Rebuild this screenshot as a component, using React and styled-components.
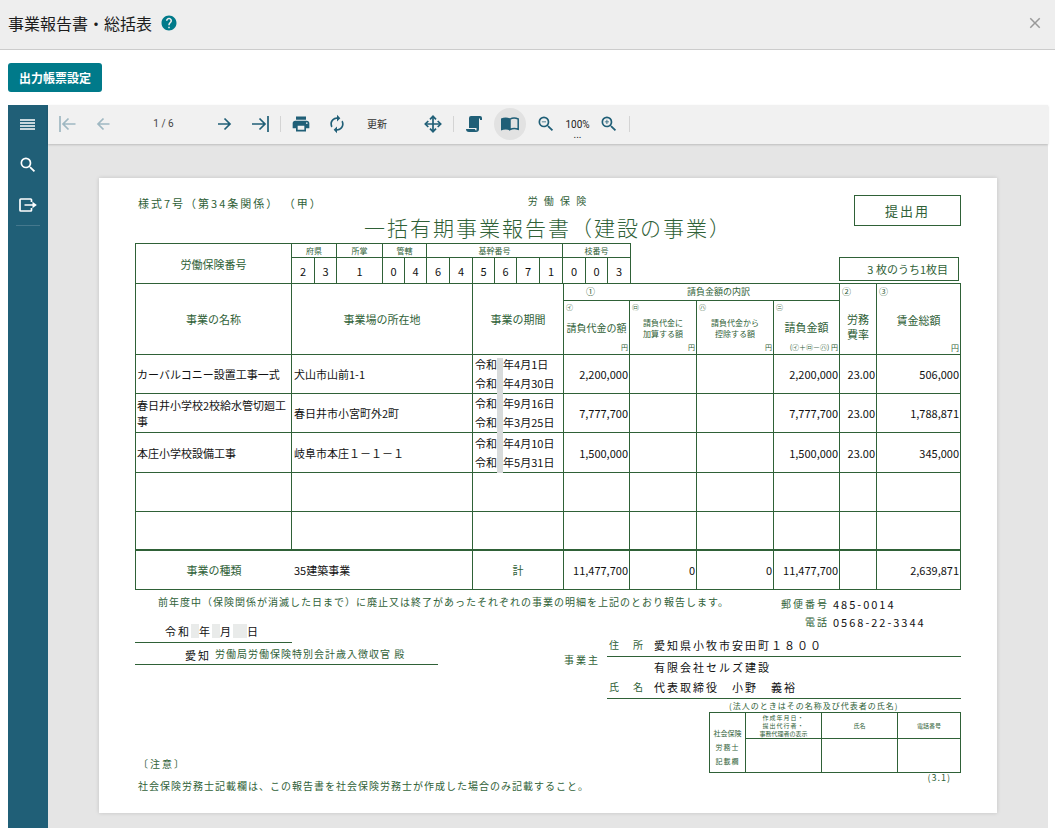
import styled, { createGlobalStyle } from 'styled-components';
import { MdHelp, MdClose, MdSearch, MdPrint, MdAutorenew, MdZoomIn, MdZoomOut } from 'react-icons/md';

const green = '#2f6137';
const teal = '#007a8a';
const navy = '#205f77';

const GlobalStyle = createGlobalStyle`
  * {
    box-sizing: border-box;
  }

  body {
    margin: 0;
    background-color: #ffffff;
    font-family: "Noto Sans CJK JP", "Noto Sans", sans-serif;
  }

  button {
    font-family: inherit;
    cursor: pointer;
  }
`;

const Page = styled.div`
  display: flex;
  flex-direction: column;
  min-height: 100vh;
`;

const Header = styled.header`
  display: flex;
  align-items: center;
  gap: 8px;
  height: 50px;
  padding: 0 8px 4px;
  background-color: #eeeeee;
  border-bottom: 1px solid #cccccc;
`;

const Title = styled.h1`
  margin: 0;
  font-size: 16px;
  line-height: 24px;
  font-weight: 400;
  color: #1c1c1c;
`;

const PlainButton = styled.button`
  display: flex;
  align-items: center;
  justify-content: center;
  padding: 0;
  border: 0;
  background: none;
  color: ${props => props.$color};
`;

const CloseButton = styled(PlainButton)`
  margin-left: auto;
  width: 24px;
  height: 24px;
`;

const Actions = styled.div`
  padding: 13px 8px;
`;

const SettingButton = styled.button`
  display: block;
  height: 29px;
  padding: 0 11px;
  border: 0;
  border-radius: 3px;
  background-color: ${teal};
  color: #ffffff;
  font-size: 12px;
  line-height: 27px;
  font-weight: bold;

  &:hover {
    background-color: #006675;
  }
`;

const Viewer = styled.main`
  display: flex;
  flex: 1;
  margin: 0 7px 0 8px;
`;

const Sidebar = styled.nav`
  width: 40px;
  flex-shrink: 0;
  background-color: ${navy};
`;

const SideButton = styled(PlainButton)`
  width: 40px;
  height: 40px;
`;

const SideLine = styled.div`
  height: 1px;
  margin: 0 8px;
  background-color: #45788d;
`;

const ViewerBody = styled.div`
  display: flex;
  flex-direction: column;
  flex: 1;
  min-width: 0;
  background-color: #e5e5e5;
`;

const Toolbar = styled.div`
  display: flex;
  align-items: center;
  height: 39px;
  padding: 0 0 2px 1px;
  background-color: #f1f1f1;
  box-shadow: 0 1px 2px rgba(0, 0, 0, 0.18);
`;

const ToolButton = styled(PlainButton)`
  width: 36px;
  height: 36px;

  span {
    display: flex;
    align-items: center;
    justify-content: center;
    width: 32px;
    height: 32px;
    border-radius: 50%;
    background-color: ${props => (props.$active ? '#e2e2e2' : 'transparent')};
  }
`;

const PageCount = styled.div`
  width: 85px;
  font-family: Roboto, sans-serif;
  font-size: 10px;
  line-height: 12px;
  text-align: center;
  color: #444444;
`;

const Refresh = styled(PlainButton)`
  justify-content: flex-start;
  width: 60px;
  padding-left: 12px;
  font-size: 10px;
`;

const ZoomButton = styled(PlainButton)`
  flex-direction: column;
  align-self: flex-start;
  width: 27px;
  padding-top: 14px;
  font-family: Roboto, sans-serif;
  font-size: 10px;
  line-height: 12px;

  small {
    font-size: 10px;
    line-height: 8px;
  }
`;

const Separator = styled.div`
  width: 1px;
  height: 16px;
  margin: 0 2px;
  background-color: #d4d4d4;
`;

const Canvas = styled.div`
  padding: 34px 51px 15px;
`;

const Paper = styled.article`
  max-width: 898px;
  margin: 0 auto;
  padding: 17px 36px 16px;
  background-color: #ffffff;
  box-shadow: 0 0 4px rgba(0, 0, 0, 0.15);
  color: ${green};
  font-size: 11px;
`;

const PaperHead = styled.div`
  display: grid;
  grid-template-columns: 1fr auto 1fr;
  height: 48px;
`;

const FormNo = styled.div`
  padding-left: 3px;
  line-height: 16px;
  letter-spacing: 2px;
  white-space: nowrap;
`;

const FormTitle = styled.div`
  text-align: center;

  small {
    display: block;
    padding-left: 20px;
    font-size: 10px;
    line-height: 12px;
    letter-spacing: 2px;
  }

  h2 {
    margin: 0;
    font-size: 21px;
    line-height: 40px;
    font-weight: 300;
    letter-spacing: 2px;
    white-space: nowrap;
  }
`;

const Stamp = styled.div`
  justify-self: end;
  width: 107px;
  height: 31px;
  border: 1px solid ${green};
  font-size: 13px;
  line-height: 30px;
  letter-spacing: 2px;
  text-align: center;
`;

const NumberRow = styled.div`
  display: flex;
  justify-content: space-between;
  align-items: flex-end;
`;

const SheetCount = styled.div`
  width: 120px;
  height: 24px;
  margin: 0 2px 2px;
  padding-right: 10px;
  border: 1px solid ${green};
  line-height: 22px;
  text-align: right;
`;

const FormTable = styled.table`
  width: ${props => props.$width || '100%'};
  table-layout: fixed;
  border-collapse: separate;
  border-spacing: 0;
  border-top: 1px solid ${green};
  border-left: 1px solid ${green};
`;

const Row = styled.tr`
  height: ${props => props.$height}px;
`;

const Cell = styled.td`
  padding: ${props => props.$pad || '0'};
  border-right: ${props => (props.$open ? '0' : `1px solid ${green}`)};
  border-bottom: ${props => (props.$last ? '0' : `${props.$thick ? 2 : 1}px solid ${green}`)};
  color: ${props => (props.$ink ? '#111111' : green)};
  font-size: ${props => props.$size || 11}px;
  font-weight: 400;
  line-height: ${props => props.$line || 16}px;
  text-align: ${props => props.$align || 'center'};
  vertical-align: middle;
`;

const HeadBox = styled.div`
  display: flex;
  flex-direction: column;
  height: ${props => props.$height}px;
`;

const Mark = styled.div`
  height: ${props => (props.$big ? 16 : 13)}px;
  padding-left: 2px;
  font-size: ${props => (props.$big ? 9 : 7)}px;
  line-height: ${props => (props.$big ? 16 : 13)}px;
  text-align: left;
`;

const HeadText = styled.div`
  display: flex;
  flex: 1;
  align-items: center;
  justify-content: center;
  font-size: ${props => props.$size || 11}px;
  line-height: ${props => props.$line || 15}px;
  white-space: pre;
`;

const Unit = styled.div`
  height: 13px;
  padding-right: 1px;
  font-size: ${props => props.$size || 7}px;
  line-height: 13px;
  text-align: right;
  white-space: nowrap;
`;

const Breakdown = styled.div`
  display: flex;
  gap: 92px;
  padding-left: 22px;
`;

const PeriodCell = styled(Cell)`
  position: relative;
`;

/* strip that hides the era years */
const YearMask = styled.div`
  position: absolute;
  z-index: 1;
  top: 3px;
  left: 24px;
  width: 6px;
  height: 115px;
  background-color: #d8dbdb;
`;

const Bottom = styled.div`
  display: grid;
  grid-template-columns: 303px 399px;
  justify-content: space-between;
`;

const Declaration = styled.p`
  margin: 0;
  padding-left: 23px;
  font-size: 10px;
  line-height: 24px;
  letter-spacing: 1px;
  white-space: nowrap;
`;

const DateLine = styled.div`
  display: flex;
  align-items: center;
  width: 157px;
  height: 29px;
  padding: 6px 0 0 30px;
  border-bottom: 1px solid ${green};
  color: #111111;
  letter-spacing: 2px;
`;

const Blank = styled.span`
  width: ${props => props.$width}px;
  height: 14px;
  background-color: #e9ebea;
`;

const Addressee = styled.div`
  display: flex;
  gap: 4px;
  height: 22px;
  padding-left: 50px;
  border-bottom: 1px solid ${green};
  font-size: 10px;
  line-height: 22px;
  letter-spacing: 1px;
  white-space: nowrap;

  b {
    color: #111111;
    font-size: 11px;
    line-height: 24px;
    font-weight: 400;
    letter-spacing: 2px;
  }
`;

const Notes = styled.div`
  margin-top: 88px;
  padding-left: 3px;
  font-size: 10px;
  line-height: 22px;
  letter-spacing: 1px;
  white-space: nowrap;

  h3 {
    margin: 0;
    font-size: 10px;
    font-weight: 400;
    letter-spacing: 2px;
  }

  p {
    margin: 0;
  }
`;

const Contact = styled.dl`
  display: grid;
  grid-template-columns: auto 128px;
  justify-content: end;
  column-gap: 4px;
  margin: 5px 0 0;
  line-height: 18px;
  letter-spacing: 2px;

  dt {
    font-size: 10px;
    text-align: right;
  }

  dd {
    margin: 0;
    color: #111111;
  }
`;

const Owner = styled.div`
  display: flex;
`;

const OwnerLabel = styled.div`
  width: 45px;
  padding: 20px 0 0 2px;
  font-size: 10px;
  line-height: 18px;
  letter-spacing: 2px;
`;

const OwnerFields = styled.dl`
  flex: 1;
  margin: 0;
`;

const OwnerField = styled.div`
  display: grid;
  grid-template-columns: 47px 1fr;
  height: ${props => props.$height}px;
  padding-top: ${props => props.$top || 0}px;
  border-bottom: ${props => (props.$lined ? `1px solid ${green}` : '0')};
  line-height: 20px;
  letter-spacing: 2px;

  dt {
    padding-left: 2px;
    font-size: 10px;
  }

  dd {
    grid-column: 2;
    margin: 0;
    color: #111111;
  }
`;

const Agent = styled.div`
  width: 252px;
  margin-left: auto;
`;

const AgentNote = styled.div`
  padding-left: 20px;
  font-size: 8px;
  line-height: 13px;
  letter-spacing: 1px;
  white-space: nowrap;
`;

const Spaced = styled.span`
  display: block;
  letter-spacing: 1px;
`;

const Version = styled.div`
  padding-right: 10px;
  font-size: 9px;
  line-height: 10px;
  letter-spacing: 1px;
  text-align: right;
`;

const Icon = ({ children }) => (
  <svg width="18" height="18" viewBox="0 0 18 18" fill="none" stroke="currentColor" strokeWidth="1.7" aria-hidden="true">
    {children}
  </svg>
);

const MenuIcon = () => (
  <Icon><path d="M1 4h15M1 7h15M1 10h15M1 13h15" strokeWidth="1.4" /></Icon>
);

const ExportIcon = () => (
  <Icon>
    <path d="M12.5 6V3.8a.8.8 0 0 0-.8-.8H1.800a.8.8 0 0 0-.8.8v10.400a.8.8 0 0 0 .8.8h9.900a.8.8 0 0 0 .8-.8V12M5.500 9h9" />
    <path d="M13.5 5.800L17.800 9l-4.300 3.200z" fill="currentColor" stroke="none" />
  </Icon>
);

const FirstIcon = () => (
  <Icon><path d="M2 1v16M17.5 9H5M10.500 3.500L5 9l5.500 5.500" /></Icon>
);

const PrevIcon = () => (
  <Icon><path d="M15.500 9H4M9.500 3.500L4 9l5.500 5.500" /></Icon>
);

const NextIcon = () => (
  <Icon><path d="M3 9h12M9.500 3.500L15 9l-5.500 5.500" /></Icon>
);

const LastIcon = () => (
  <Icon><path d="M17 1v16M1 9h13M8.500 3.500L14 9l-5.500 5.500" /></Icon>
);

const MoveIcon = () => (
  <Icon>
    <path d="M9 2v14M2 9h14" />
    <path d="M6 4.300L9 1.300l3 3M6 13.700l3 3 3-3M4.300 6l-3 3 3 3M13.700 6l3 3-3 3" />
  </Icon>
);

const ScrollIcon = () => (
  <Icon>
    <path
      d="M6 1h9a2 2 0 0 1 2 2v2h-2V3.500h-1V14a3 3 0 0 1-3 3H4a3 3 0 0 1-3-3h9a1.500 1.500 0 0 0 1.500 1.500V13H4V3a2 2 0 0 1 2-2z"
      fill="currentColor"
      stroke="none"
    />
  </Icon>
);

const BookIcon = () => (
  <Icon>
    <path d="M0 3.500C3 2 6.500 2 9 3.500v12C6.500 14 3 14 0 15.500z" fill="currentColor" stroke="none" />
    <path d="M9 4.200c2.500-1.400 5.500-1.400 8.200-.2v10.200c-2.700-1-5.700-1-8.200.3z" strokeWidth="1.5" />
  </Icon>
);

const numberGroups = [
  { label: '府県', digits: '23' },
  { label: '所掌', digits: '1' },
  { label: '管轄', digits: '04' },
  { label: '基幹番号', digits: '645671' },
  { label: '枝番号', digits: '003' },
];

const numberWidths = [156, 23, 22, 46, 22, 22, 23, 23, 22, 22, 23, 23, 23, 22, 23];
const columnWidths = [156, 181, 91, 66, 67, 77, 66, 37, 84];

const works = [
  { name: 'カーバルコニー設置工事一式', place: '犬山市山前1-1', from: '令和6年4月1日', to: '令和6年4月30日', price: '2,200,000', rate: '23.00', wage: '506,000' },
  { name: '春日井小学校2校給水管切廻工事', place: '春日井市小宮町外2町', from: '令和6年9月16日', to: '令和7年3月25日', price: '7,777,700', rate: '23.00', wage: '1,788,871' },
  { name: '本庄小学校設備工事', place: '岐阜市本庄１－１－１', from: '令和6年4月10日', to: '令和6年5月31日', price: '1,500,000', rate: '23.00', wage: '345,000' },
];

const Cols = ({ widths }) => (
  <colgroup>
    {widths.map((width, i) => <col key={i} width={width} />)}
  </colgroup>
);

const Amount = ({ children }) => (
  <Cell $ink $align="right" $pad="0 1px 0 0">{children}</Cell>
);

function InsuranceNumber() {
  return (
    <FormTable $width="496px">
      <Cols widths={numberWidths} />
      <tbody>
        <Row $height={14}>
          <Cell as="th" rowSpan={2} $last>労働保険番号</Cell>
          {numberGroups.map(group => (
            <Cell as="th" key={group.label} colSpan={group.digits.length} $size={8} $line={12}>{group.label}</Cell>
          ))}
        </Row>
        <Row $height={25}>
          {numberGroups.map(group => group.digits.split('').map((digit, i) => (
            <Cell key={group.label + i} $ink $last>{digit}</Cell>
          )))}
        </Row>
      </tbody>
    </FormTable>
  );
}

function HeadCell({ mark, big, text, size, line, unit, unitSize, height, rowSpan }) {
  return (
    <Cell as="th" rowSpan={rowSpan}>
      <HeadBox $height={height}>
        <Mark $big={big}>{mark}</Mark>
        <HeadText $size={size} $line={line}>{text}</HeadText>
        {unit && <Unit $size={unitSize}>{unit}</Unit>}
      </HeadBox>
    </Cell>
  );
}

function WorkTable() {
  return (
    <FormTable>
      <Cols widths={columnWidths} />
      <thead>
        <Row $height={17}>
          <Cell as="th" rowSpan={2}>事業の名称</Cell>
          <Cell as="th" rowSpan={2}>事業場の所在地</Cell>
          <Cell as="th" rowSpan={2}>事業の期間</Cell>
          <Cell as="th" colSpan={4} $size={9}>
            <Breakdown><span>①</span><span>請負金額の内訳</span></Breakdown>
          </Cell>
          <HeadCell rowSpan={2} height={70} mark="②" big text={'労務\n費率'} />
          <HeadCell rowSpan={2} height={70} mark="③" big text="賃金総額" unit="円" unitSize={8} />
        </Row>
        <Row $height={54}>
          <HeadCell height={53} mark="㋑" text="請負代金の額" size={10} unit="円" />
          <HeadCell height={53} mark="㋺" text={'請負代金に\n加算する額'} size={8} line={11} unit="円" />
          <HeadCell height={53} mark="㋩" text={'請負代金から\n控除する額'} size={8} line={11} unit="円" />
          <HeadCell height={53} mark="㋥" text="請負金額" unit="(㋑＋㋺－㋩) 円" />
        </Row>
      </thead>
      <tbody>
        {works.map((work, i) => (
          <Row key={work.name} $height={i === 2 ? 40 : 39}>
            <Cell $ink $align="left" $pad="0 1px">{work.name}</Cell>
            <Cell $ink $align="left" $pad="0 2px">{work.place}</Cell>
            <PeriodCell $ink $align="left" $pad="0 2px" $line={19}>
              {work.from}<br />{work.to}
              {i === 0 && <YearMask />}
            </PeriodCell>
            <Amount>{work.price}</Amount>
            <Cell />
            <Cell />
            <Amount>{work.price}</Amount>
            <Amount>{work.rate}</Amount>
            <Amount>{work.wage}</Amount>
          </Row>
        ))}
        <Row $height={39}>
          {columnWidths.map((width, i) => <Cell key={i} />)}
        </Row>
        <Row $height={39}>
          {columnWidths.map((width, i) => <Cell key={i} $thick />)}
        </Row>
      </tbody>
      <tfoot>
        <Row $height={39}>
          <Cell as="th" $open>事業の種類</Cell>
          <Cell $ink $align="left" $pad="0 2px">35建築事業</Cell>
          <Cell as="th">計</Cell>
          <Amount>11,477,700</Amount>
          <Amount>0</Amount>
          <Amount>0</Amount>
          <Amount>11,477,700</Amount>
          <Cell />
          <Amount>2,639,871</Amount>
        </Row>
      </tfoot>
    </FormTable>
  );
}

function AgentTable() {
  return (
    <FormTable>
      <Cols widths={[36, 76, 76, 63]} />
      <tbody>
        <Row $height={26}>
          <Cell as="th" rowSpan={2} $size={7} $line={14} $pad="8px 0 0">
            社会保険
            <Spaced>労務士</Spaced>
            <Spaced>記載欄</Spaced>
          </Cell>
          <Cell as="th" $size={6} $line={8}>
            <Spaced>作成年月日・</Spaced>
            <Spaced>提出代行者・</Spaced>
            事務代理者の表示
          </Cell>
          <Cell as="th" $size={6} $line={8}>氏名</Cell>
          <Cell as="th" $size={6} $line={8}>電話番号</Cell>
        </Row>
        <Row $height={34}>
          <Cell />
          <Cell />
          <Cell />
        </Row>
      </tbody>
    </FormTable>
  );
}

function Report() {
  return (
    <Paper>
      <PaperHead>
        <FormNo>様式7号（第34条関係） （甲）</FormNo>
        <FormTitle>
          <small>労 働 保 険</small>
          <h2>一括有期事業報告書（建設の事業）</h2>
        </FormTitle>
        <Stamp>提出用</Stamp>
      </PaperHead>

      <NumberRow>
        <InsuranceNumber />
        <SheetCount>3 枚のうち1枚目</SheetCount>
      </NumberRow>
      <WorkTable />

      <Bottom>
        <div>
          <Declaration>前年度中（保険関係が消滅した日まで）に廃止又は終了があったそれぞれの事業の明細を上記のとおり報告します。</Declaration>
          <DateLine>
            令和<Blank $width={8} />年<Blank $width={8} />月<Blank $width={14} />日
          </DateLine>
          <Addressee><b>愛知</b>労働局労働保険特別会計歳入徴収官 殿</Addressee>
          <Notes>
            <h3>〔注意〕</h3>
            <p>社会保険労務士記載欄は、この報告書を社会保険労務士が作成した場合のみ記載すること。</p>
          </Notes>
        </div>
        <div>
          <Contact>
            <dt>郵便番号</dt>
            <dd>485-0014</dd>
            <dt>電話</dt>
            <dd>0568-22-3344</dd>
          </Contact>
          <Owner>
            <OwnerLabel>事業主</OwnerLabel>
            <OwnerFields>
              <OwnerField $height={26} $top={4} $lined>
                <dt>住　所</dt>
                <dd>愛知県小牧市安田町１８００</dd>
              </OwnerField>
              <OwnerField $height={20}>
                <dd>有限会社セルズ建設</dd>
              </OwnerField>
              <OwnerField $height={22} $lined>
                <dt>氏　名</dt>
                <dd>代表取締役　小野　義裕</dd>
              </OwnerField>
            </OwnerFields>
          </Owner>
          <Agent>
            <AgentNote>(法人のときはその名称及び代表者の氏名)</AgentNote>
            <AgentTable />
            <Version>(3.1)</Version>
          </Agent>
        </div>
      </Bottom>
    </Paper>
  );
}

function ViewerToolbar() {
  return (
    <Toolbar>
      <ToolButton $color="#9fb8c2" aria-label="最初のページ"><FirstIcon /></ToolButton>
      <ToolButton $color="#9fb8c2" aria-label="前のページ"><PrevIcon /></ToolButton>
      <PageCount>1 / 6</PageCount>
      <ToolButton $color={navy} aria-label="次のページ"><NextIcon /></ToolButton>
      <ToolButton $color={navy} aria-label="最後のページ"><LastIcon /></ToolButton>
      <Separator />
      <ToolButton $color={navy} aria-label="印刷"><MdPrint size={20} /></ToolButton>
      <ToolButton $color={navy} aria-label="再読み込み"><MdAutorenew size={20} /></ToolButton>
      <Refresh $color="#333333">更新</Refresh>
      <ToolButton $color={navy} aria-label="移動"><MoveIcon /></ToolButton>
      <Separator />
      <ToolButton $color={navy} aria-label="連続表示"><ScrollIcon /></ToolButton>
      <ToolButton $color={navy} $active aria-label="単一ページ"><span><BookIcon /></span></ToolButton>
      <ToolButton $color={navy} aria-label="縮小"><MdZoomOut size={20} /></ToolButton>
      <ZoomButton $color="#222222">100%<small>...</small></ZoomButton>
      <ToolButton $color={navy} aria-label="拡大"><MdZoomIn size={20} /></ToolButton>
      <Separator />
    </Toolbar>
  );
}

function App() {
  return (
    <Page>
      <GlobalStyle />
      <Header>
        <Title>事業報告書・総括表</Title>
        <PlainButton $color={teal} aria-label="ヘルプ"><MdHelp size={18} /></PlainButton>
        <CloseButton $color="#999999" aria-label="閉じる"><MdClose size={18} /></CloseButton>
      </Header>
      <Actions>
        <SettingButton>出力帳票設定</SettingButton>
      </Actions>
      <Viewer>
        <Sidebar>
          <SideButton $color="#ffffff" aria-label="メニュー"><MenuIcon /></SideButton>
          <SideButton $color="#ffffff" aria-label="検索"><MdSearch size={20} /></SideButton>
          <SideButton $color="#ffffff" aria-label="エクスポート"><ExportIcon /></SideButton>
          <SideLine />
        </Sidebar>
        <ViewerBody>
          <ViewerToolbar />
          <Canvas>
            <Report />
          </Canvas>
        </ViewerBody>
      </Viewer>
    </Page>
  );
}

export default App;
